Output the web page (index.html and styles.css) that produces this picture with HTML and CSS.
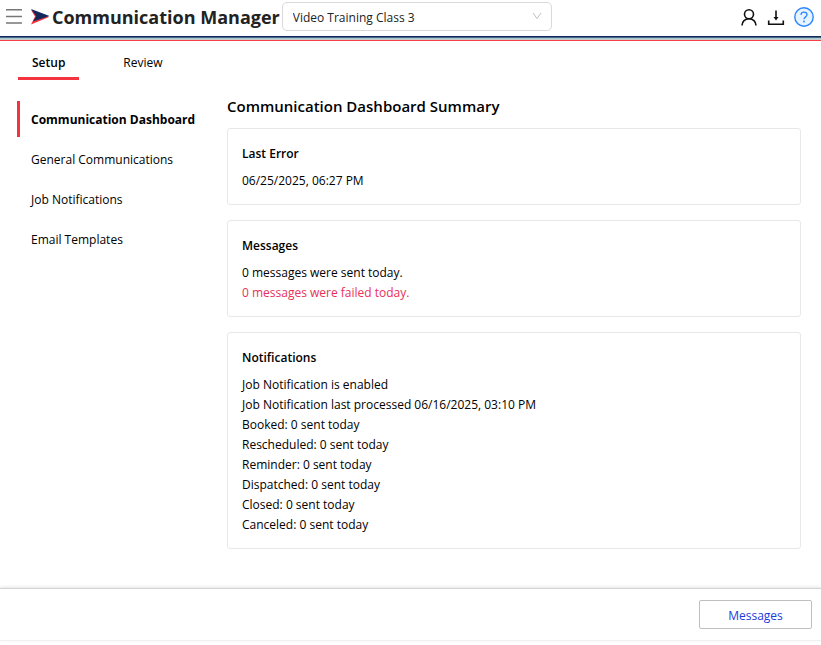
FILE: index.html
```html
<!DOCTYPE html>
<html lang="en">
<head>
    <meta charset="utf-8">
    <meta name="viewport" content="width=device-width, initial-scale=1">
    <title>Communication Manager</title>
    <link rel="stylesheet" href="styles.css">
</head>
<body>
    <header class="header">
        <button class="icon_btn menu_btn" type="button" aria-label="Menu">
            <svg width="16" height="16" viewBox="0 0 16 16"><path d="M0 .8h16M0 7.500h16M0 14h16" stroke="#777" stroke-width="1.4"/></svg>
        </button>
        <svg class="logo" width="20" height="16" viewBox="0 0 20 16">
            <path d="M1 1l4 6.500-4 8L19 8z" fill="#f5333f"/>
            <path d="M1 0l18.500 7L3 12.500l3.200-5.300z" fill="#14275a"/>
        </svg>
        <h1 class="app_name">Communication Manager</h1>
        <div class="picker">
            <select class="company" aria-label="Company">
                <option>Video Training Class 3</option>
            </select>
            <svg class="arrow" width="10" height="8" viewBox="0 0 10 8"><path d="M1 1l4 5.500L9 1" fill="none" stroke="#bfbfbf"/></svg>
        </div>
        <div class="tools">
            <button class="icon_btn" type="button" aria-label="Account">
                <svg width="18" height="18" viewBox="0 0 18 18" fill="none" stroke="#111" stroke-width="1.600"><circle cx="9" cy="6.200" r="4.500"/><path d="M2 17.500c0-4 3-6.800 7-6.800s7 2.800 7 6.800"/></svg>
            </button>
            <button class="icon_btn" type="button" aria-label="Download">
                <svg width="18" height="18" viewBox="0 0 18 18"><path d="M9 2.500v8M1.700 12.500v3.700h14.600v-3.700" fill="none" stroke="#111" stroke-width="1.600"/><path d="M6.500 9h5L9 12.500z" fill="#111"/></svg>
            </button>
            <button class="icon_btn" type="button" aria-label="Help">
                <svg width="20" height="20" viewBox="0 0 20 20" fill="none" stroke="#2b85ff"><circle cx="10" cy="10" r="9.200" fill="#e6f4ff" stroke-width="1.400"/><path d="M7 8c0-1.900 1.200-2.900 3-2.900s3 1 3 2.700c0 2.100-3 2.100-3 4.400" stroke-width="1.300"/><circle cx="10" cy="14.500" r=".9" fill="#2b85ff" stroke="none"/></svg>
            </button>
        </div>
    </header>
    <nav class="tabs">
        <a class="tab active" href="#setup">Setup</a>
        <a class="tab" href="#review">Review</a>
    </nav>
    <div class="container">
        <nav class="side">
            <a class="side_item active" href="#dashboard">Communication Dashboard</a>
            <a class="side_item" href="#general">General Communications</a>
            <a class="side_item" href="#jobs">Job Notifications</a>
            <a class="side_item" href="#templates">Email Templates</a>
        </nav>
        <main class="main">
            <h2 class="title">Communication Dashboard Summary</h2>
            <section class="card">
                <h3>Last Error</h3>
                <p>06/25/2025, 06:27 PM</p>
            </section>
            <section class="card">
                <h3>Messages</h3>
                <p>0 messages were sent today.</p>
                <p class="failed">0 messages were failed today.</p>
            </section>
            <section class="card">
                <h3>Notifications</h3>
                <p>Job Notification is enabled</p>
                <p>Job Notification last processed 06/16/2025, 03:10 PM</p>
                <p>Booked: 0 sent today</p>
                <p>Rescheduled: 0 sent today</p>
                <p>Reminder: 0 sent today</p>
                <p>Dispatched: 0 sent today</p>
                <p>Closed: 0 sent today</p>
                <p>Canceled: 0 sent today</p>
            </section>
        </main>
    </div>
    <footer class="footer">
        <button class="btn" type="button">Messages</button>
    </footer>
</body>
</html>
```

FILE: styles.css
```css
* { box-sizing: border-box; }
body { margin: 0; min-height: 100vh; display: flex; flex-direction: column; padding-bottom: 4px; background: #fff; color: #000; font: 12px/20px "Segoe UI", "Open Sans", sans-serif; }
h1, h2, h3, p { margin: 0; }
a { color: inherit; text-decoration: none; }
button, select { font: inherit; }
svg { display: block; }

/* header */
.header { display: flex; align-items: center; height: 36px; padding: 0 7px 3px 6px; }
.header::after { content: ""; position: absolute; left: 0; right: 0; top: 36px; height: 5px; background: linear-gradient(#14275a 0 1px, #4a6688 1px 2px, #a3cdcf 2px 3px, #c9c9c9 3px 4px, #f5404b 4px 5px); }
.icon_btn { padding: 0; border: 0; background: none; cursor: pointer; }
.logo { margin-left: 8px; }
.app_name { margin-left: 2px; font-size: 18px; font-weight: 700; color: #222; white-space: nowrap; }
.picker { position: relative; width: 270px; margin-left: 2px; }
.company { display: block; width: 100%; height: 29px; padding: 2px 28px 0 10px; border: 1px solid #d9d9d9; border-radius: 5px; background: #fff; color: #222; appearance: none; }
.arrow { position: absolute; right: 10px; top: 10px; pointer-events: none; }
.tools { display: flex; align-items: center; gap: 9px; margin-left: auto; }

/* tabs */
.tabs { display: flex; gap: 30px; margin-top: 17px; padding: 0 18px; }
.tab { padding: 0 14px 4px; border-bottom: 3px solid transparent; }
.tab.active { border-color: #f5333f; font-weight: 600; }

.container { flex: 1; display: flex; padding: 16px 20px 16px 17px; }
.side { flex: 0 0 210px; display: flex; flex-direction: column; gap: 4px; padding-top: 5px; }
.side_item { padding: 9px 11px 7px; border-left: 3px solid transparent; }
.side_item.active { border-color: #f5333f; font-weight: 700; }
.main { flex: 1; display: flex; flex-direction: column; gap: 15px; }
.title { margin-bottom: -3px; font-size: 15px; font-weight: 600; }

/* cards */
.card { padding: 15px 14px 13px; border: 1px solid #e8e8e8; border-radius: 3px; }
.card h3 { margin-bottom: 7px; font-size: 12px; font-weight: 600; }
.failed { color: #e8315b; }

.footer { display: flex; justify-content: flex-end; padding: 11px 9px; border-top: 1px solid #d4d4d4; border-bottom: 1px solid #f0f0f0; box-shadow: 0 -1px 3px #e4e4e4; }
.btn { width: 113px; height: 29px; padding: 2px 0 0; border: 1px solid #bfbfbf; border-radius: 2px; background: #fff; color: #1a3be0; cursor: pointer; }
```
